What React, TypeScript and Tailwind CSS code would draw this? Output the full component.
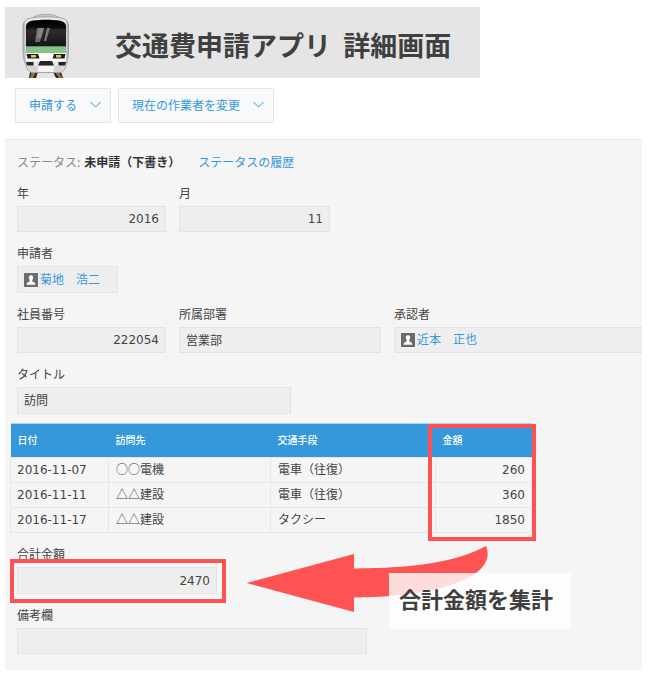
import type { ReactNode } from "react";
import clsx from "clsx";

const JP = "font-['Noto_Sans_CJK_JP','Noto_Sans',sans-serif]";
const NUM = "font-['DejaVu_Sans','Noto_Sans_CJK_JP',sans-serif]";

const visits = [
  { date: "2016-11-07", place: "○○電機", transport: "電車（往復）", amount: 260 },
  { date: "2016-11-11", place: "△△建設", transport: "電車（往復）", amount: 360 },
  { date: "2016-11-17", place: "△△建設", transport: "タクシー", amount: 1850 },
];

function TrainIcon() {
  return (
    <svg width="48" height="64" viewBox="0 0 48 64" aria-hidden="true">
      <defs>
        <linearGradient id="side" x1="0" x2="1">
          <stop offset="0" stopColor="#a5a5a5" />
          <stop offset="0.08" stopColor="#e9e9e9" />
          <stop offset="0.92" stopColor="#e9e9e9" />
          <stop offset="1" stopColor="#a5a5a5" />
        </linearGradient>
        <linearGradient id="glass" x1="0" y1="0" x2="0" y2="1">
          <stop offset="0" stopColor="#000" />
          <stop offset="0.3" stopColor="#0c0c0c" />
          <stop offset="0.4" stopColor="#2c2c2c" />
          <stop offset="1" stopColor="#161616" />
        </linearGradient>
      </defs>
      <path d="M8 58h8l-2 6H7z" fill="#2e2620" />
      <path d="M31 58h8l2 6h-7z" fill="#2e2620" />
      <path d="M10 58h4l-3 6H8z" fill="#a06f32" />
      <path d="M33 58h4l3 6h-3z" fill="#a06f32" />
      <path d="M9 6C12 1 18 .5 24 .5S36 1 39 6z" fill="#d2ccc0" stroke="#aaa59b" />
      <path
        d="M7 4.500C16 2.200 32 2.200 41 4.500c4 1 5.500 4 5.500 8V36c0 8-1.500 14-3.500 18-1 3-3 4.500-6 4.500H11c-3 0-5-1.500-6-4.500C3 50 1 44 1 36V12.500c0-4 2-7 6-8z"
        fill="url(#side)"
        stroke="#a2a2a2"
      />
      <path d="M4 13c0-4 3-6 7-6.500 8-1 18-1 26 0 4 .5 7 2.500 7 6.500v19H4z" fill="url(#glass)" />
      <path d="M15 14h7l-4 14h-5z" fill="#6c6c6c" />
      <path d="M17 14h5l-3 10h-4z" fill="#878787" />
      <path d="M25 14h3l-4 13h-2z" fill="#7b7b7b" />
      <path d="M4 32h40v7H4z" fill="#86c486" />
      <path d="M4 32h40v1H4z" fill="#628f62" />
      <path d="M4 39h40v8H4z" fill="#fafafa" />
      <path d="M4.500 40H16l1.500 4.500H5.500z" fill="#1d1d1d" />
      <path d="M32 40h11.500l-1 4.500h-12z" fill="#1d1d1d" />
      <rect x="9" y="41" width="5" height="2.500" fill="#cdd545" />
      <rect x="34" y="41" width="5" height="2.500" fill="#cdd545" />
      <path d="M4 48h7.500v3.500H5z" fill="#252525" />
      <path d="M36.500 48H44l-1 3.500h-6.500z" fill="#252525" />
      <path d="M18 47h12l2 4.500H16z" fill="#252525" />
      <path d="M5.500 52h37l-2 4-3 2H10l-3-2z" fill="#d4d4d4" />
      <path d="M16 52h16v6H16z" fill="#f4f4f4" />
    </svg>
  );
}

function Chevron() {
  return (
    <svg width="11" height="7" viewBox="0 0 11 7" fill="none" stroke="#3498db" aria-hidden="true">
      <path d="M.5 1l5 5 5-5" />
    </svg>
  );
}

function ActionButton({ children }: { children: ReactNode }) {
  return (
    <button
      type="button"
      className="flex h-[35px] items-center gap-[13px] border border-[#e3e7e8] bg-[#f7f9fa] pr-[9px] pb-0.5 pl-[13px] text-[#3498db]"
    >
      {children}
      <Chevron />
    </button>
  );
}

type FieldProps = {
  id: string;
  label: string;
  value?: string;
  numeric?: boolean;
  className: string;
};

function Field({ id, label, value = "", numeric, className }: FieldProps) {
  return (
    <div className="flex flex-col gap-1">
      <label htmlFor={id} className="leading-[18px]">
        {label}
      </label>
      <input
        id={id}
        readOnly
        defaultValue={value}
        className={clsx(
          "border border-[#e3e3e3] bg-[#eee] px-1.5 outline-none",
          numeric ? "text-right" : "pb-0.5",
          numeric ? NUM : JP,
          className
        )}
      />
    </div>
  );
}

function UserField({ label, name, className }: { label: string; name: string; className: string }) {
  return (
    <div className="flex grow flex-col gap-1">
      <span className="leading-[18px]">{label}</span>
      <div className={clsx("flex items-center gap-0.5 border-[#e3e3e3] bg-[#eee] pl-1.5", className)}>
        <svg width="14" height="14" viewBox="0 0 13 13" aria-hidden="true">
          <rect width="13" height="13" fill="#6b6b6b" />
          <path
            d="M6.500 2C8 2 8.700 3 8.500 4.500 8.400 5.600 7.800 6 7.700 7c0 1 .5 1.300 1.500 1.600 1 .3 1.300.9 1.300 2.400h-8c0-1.500.3-2.100 1.300-2.400 1-.3 1.500-.6 1.500-1.600-.1-1-.7-1.400-.8-2.500C4.300 3 5 2 6.500 2z"
            fill="#fff"
          />
        </svg>
        <a href="#user" className="pb-0.5 text-[#3498db]">
          {name}
        </a>
      </div>
    </div>
  );
}

function VisitTable() {
  return (
    <table className="w-full table-fixed border-collapse text-left">
      <colgroup>
        <col className="w-[98px]" />
        <col className="w-[162px]" />
        <col className="w-[165px]" />
        <col />
      </colgroup>
      <thead>
        <tr className="h-[34px] border-y border-[#a9d3ef] bg-[#3498db] text-[10px] text-white">
          <th className="px-[7px] pb-0.5 font-medium">日付</th>
          <th className="px-[7px] pb-0.5 font-medium">訪問先</th>
          <th className="px-[7px] pb-0.5 font-medium">交通手段</th>
          <th className="px-[7px] pb-0.5 font-medium">金額</th>
        </tr>
      </thead>
      <tbody>
        {visits.map((visit) => (
          <tr key={visit.date} className="h-[25px]">
            <td className={clsx("border border-[#e3e7e8] px-1.5", NUM)}>{visit.date}</td>
            <td className="border border-[#e3e7e8] px-[7px] pb-0.5">{visit.place}</td>
            <td className="border border-[#e3e7e8] px-[7px] pb-0.5">{visit.transport}</td>
            <td className={clsx("border border-[#e3e7e8] px-1.5 text-right", NUM)}>
              {visit.amount}
            </td>
          </tr>
        ))}
      </tbody>
    </table>
  );
}

export default function App() {
  return (
    <main className={clsx("bg-white pt-[7px] pr-1.5 pb-1.5 pl-[5px] text-xs text-[#444]", JP)}>
      <header className="flex h-[71px] max-w-[475px] items-end gap-[45px] bg-[#e5e5e5] pl-[17px]">
        <TrainIcon />
        <h1 className="self-center pt-1 text-[27px] leading-10 font-bold whitespace-nowrap text-[#404040]">
          交通費申請アプリ <span className="ml-1.5">詳細画面</span>
        </h1>
      </header>

      <div className="flex gap-[7px] py-2.5 pl-2.5">
        <ActionButton>申請する</ActionButton>
        <ActionButton>現在の作業者を変更</ActionButton>
      </div>

      <section className="mt-1.5 border-t border-[#eaeaea] bg-[#f5f5f5] pt-3 pb-4">
        <div className="flex pl-3 leading-5">
          <span className="text-[#888]">ステータス:</span>
          <strong className="ml-1 text-[#333]">未申請（下書き）</strong>
          <a href="#history" className="ml-[18px] text-[#3498db]">
            ステータスの履歴
          </a>
        </div>

        <div className="mt-3 flex flex-col gap-3 pl-3">
          <div className="flex gap-[13px]">
            <Field id="year" label="年" value="2016" numeric className="h-[26px] w-[149px]" />
            <Field id="month" label="月" value="11" numeric className="h-[26px] w-[151px]" />
          </div>
          <div className="flex">
            <UserField label="申請者" name="菊地　浩二" className="h-[27px] w-[101px] border" />
          </div>
          <div className="flex gap-[13px]">
            <Field id="number" label="社員番号" value="222054" numeric className="h-[26px] w-[149px]" />
            <Field id="department" label="所属部署" value="営業部" className="h-[26px] w-[202px]" />
            <UserField label="承認者" name="近本　正也" className="h-[26px] border-y border-l" />
          </div>
          <Field id="title" label="タイトル" value="訪問" className="h-[27px] w-[274px]" />
        </div>

        <div className="relative mt-[9px] ml-[5px] w-[522px]">
          <VisitTable />
          <div className="pointer-events-none absolute top-px -right-1 h-[117px] w-[108px] border-4 border-[#ff5252]" />
        </div>

        <div className="mt-3 flex flex-col gap-3 pl-3">
          <div className="relative">
            <Field id="total" label="合計金額" value="2470" numeric className="h-[27px] w-[200px]" />
            <div className="pointer-events-none absolute top-3.5 -left-[7px] h-11 w-[216px] border-4 border-[#ff5252]" />
            <svg
              className="absolute top-0 left-[229px]"
              width="244"
              height="68"
              viewBox="0 0 244 68"
              aria-hidden="true"
            >
              <path
                d="M.5 38L108 9v14.500c60-.5 101-6 132-22.500 3.500 9 2 18-10 27-25 17-67 24-122 24.500V67z"
                fill="#ff5252"
              />
            </svg>
            <p className="absolute top-7 left-[372px] flex h-14 w-[182px] items-center bg-white/80 pb-1 pl-2.5 text-[22px] font-bold whitespace-nowrap text-[#404040]">
              合計金額を集計
            </p>
          </div>
          <Field id="remarks" label="備考欄" className="h-[26px] w-[350px]" />
        </div>
      </section>
    </main>
  );
}
